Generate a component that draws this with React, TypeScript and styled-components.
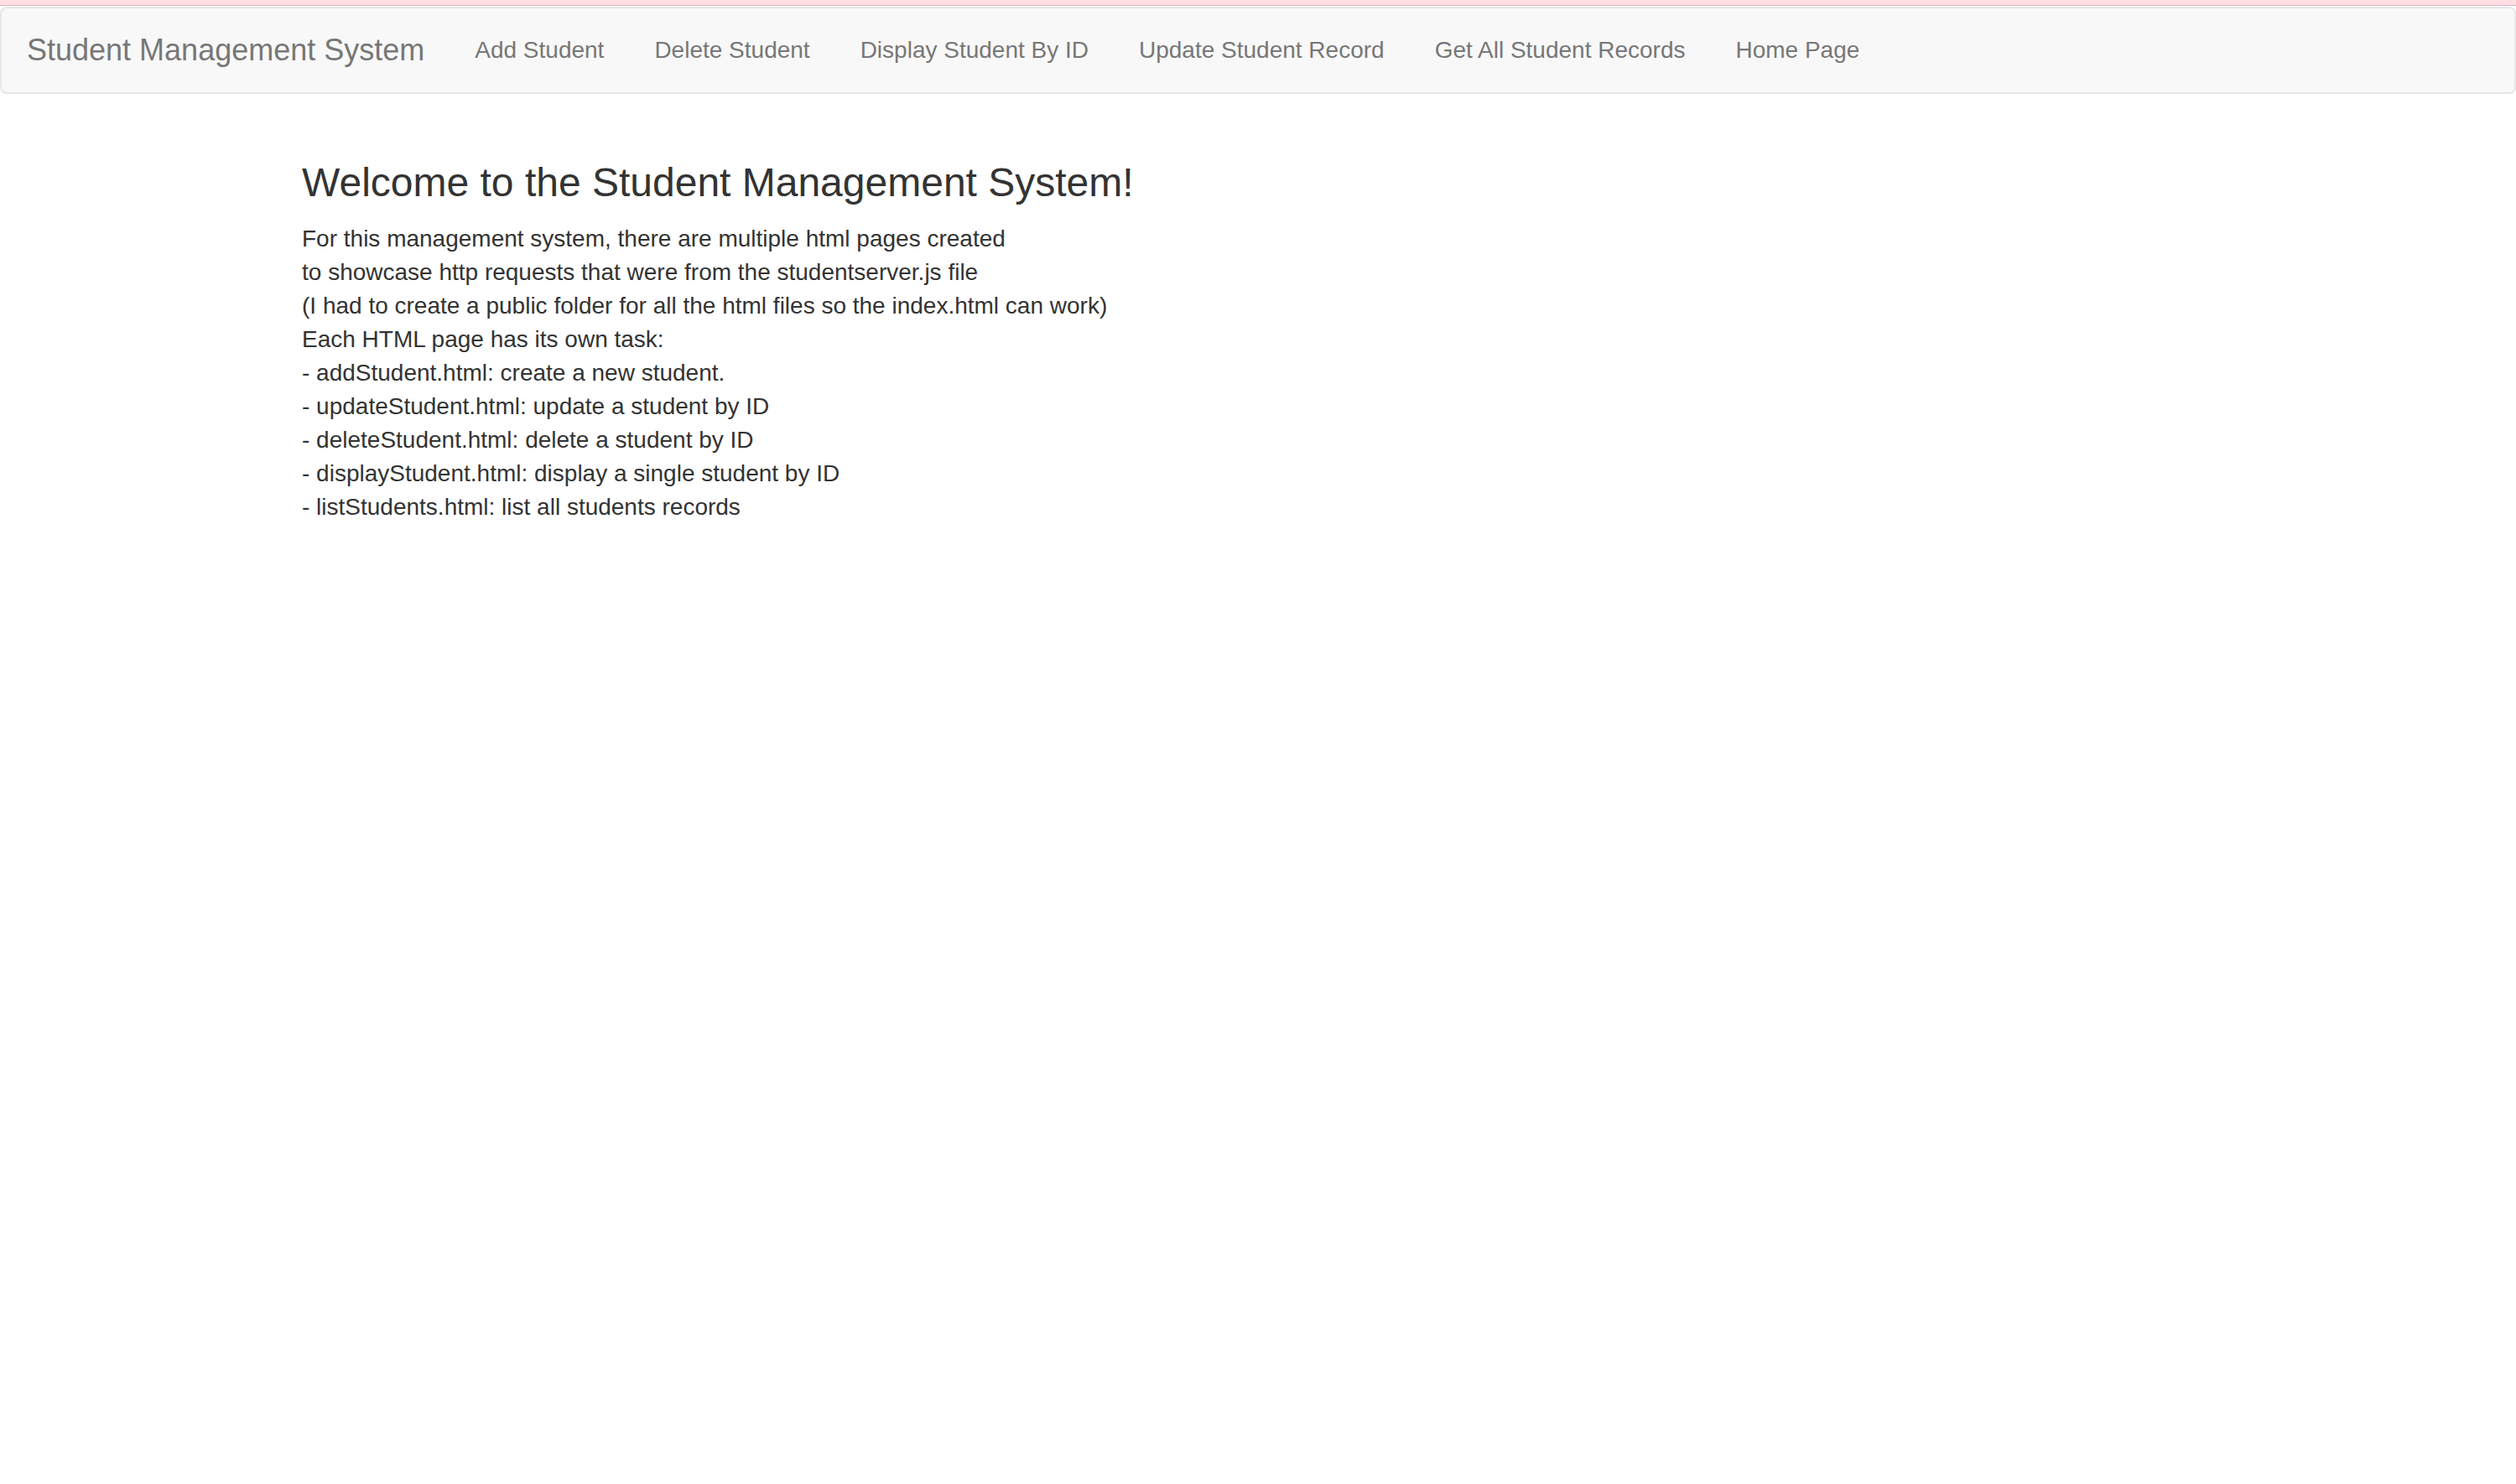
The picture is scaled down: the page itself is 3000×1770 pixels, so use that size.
import React from "react";
import styled, { createGlobalStyle } from "styled-components";

const Global = createGlobalStyle`
  html, body { margin: 0; padding: 0; background: #fff; }
  body {
    font-family: "Liberation Sans", Arial, Helvetica, sans-serif;
    font-size: 28px;
    line-height: 40px;
    color: #333;
  }
  * { box-sizing: border-box; }
`;

const TopStrip = styled.div`
  height: 7px;
  background: #ffdfe4;
  border-bottom: 1px solid #d3b3b8;
  margin-bottom: 1px;
`;

const Navbar = styled.nav`
  display: flex;
  align-items: center;
  height: 104px;
  background: #f8f8f8;
  border: 2px solid #e7e7e7;
  border-radius: 8px;
`;

const Brand = styled.a`
  display: block;
  padding: 30px;
  height: 100px;
  font-size: 36px;
  line-height: 40px;
  color: #777;
  text-decoration: none;
`;

const NavList = styled.ul`
  display: flex;
  list-style: none;
  margin: 0;
  padding: 0;
`;

const NavLink = styled.a`
  display: block;
  padding: 30px;
  font-size: 28px;
  line-height: 40px;
  color: #777;
  text-decoration: none;
`;

const Container = styled.main`
  width: 2340px;
  margin: 0 auto;
  padding: 80px 30px 0;
`;

const Heading = styled.h3`
  margin: 0 0 20px;
  font-size: 48px;
  font-weight: 500;
  line-height: 1.1;
  color: #333;
`;

const Text = styled.p`
  margin: 0;
  font-size: 28px;
  line-height: 40px;
`;

const links = [
  "Add Student",
  "Delete Student",
  "Display Student By ID",
  "Update Student Record",
  "Get All Student Records",
  "Home Page",
];

const lines = [
  "For this management system, there are multiple html pages created",
  "to showcase http requests that were from the studentserver.js file",
  "(I had to create a public folder for all the html files so the index.html can work)",
  "Each HTML page has its own task:",
  "- addStudent.html: create a new student.",
  "- updateStudent.html: update a student by ID",
  "- deleteStudent.html: delete a student by ID",
  "- displayStudent.html: display a single student by ID",
  "- listStudents.html: list all students records",
];

export default function App() {
  return (
    <>
      <Global />
      <TopStrip />
      <Navbar>
        <Brand href="#">Student Management System</Brand>
        <NavList>
          {links.map((l) => (
            <li key={l}>
              <NavLink href="#">{l}</NavLink>
            </li>
          ))}
        </NavList>
      </Navbar>
      <Container>
        <Heading>Welcome to the Student Management System!</Heading>
        <Text>
          {lines.map((l, i) => (
            <React.Fragment key={i}>
              {l}
              {i < lines.length - 1 && <br />}
            </React.Fragment>
          ))}
        </Text>
      </Container>
    </>
  );
}
